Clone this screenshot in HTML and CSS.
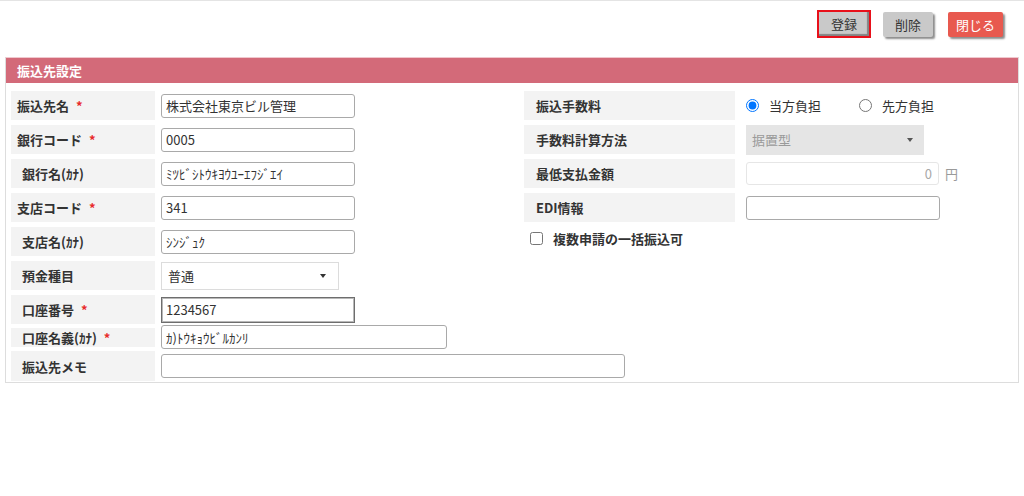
FILE: index.html
```html
<!DOCTYPE html>
<html lang="ja">
<head>
<meta charset="utf-8">
<title>振込先設定</title>
<link rel="stylesheet" href="styles.css">
</head>
<body>
<div class="page">
  <div class="toolbar">
    <button class="btn btn-focus">登録</button>
    <button class="btn btn-delete">削除</button>
    <button class="btn btn-close">閉じる</button>
  </div>
  <section class="panel">
    <h2 class="panel-head">振込先設定</h2>
    <div class="panel-body">
      <div class="col-left">
        <div class="row">
          <div class="label">振込先名 <span class="req">*</span></div>
          <input class="field w194" type="text" value="株式会社東京ビル管理">
        </div>
        <div class="row">
          <div class="label">銀行コード <span class="req">*</span></div>
          <input class="field w194" type="text" value="0005">
        </div>
        <div class="row">
          <div class="label indent">銀行名(ｶﾅ)</div>
          <input class="field w194" type="text" value="ﾐﾂﾋﾞｼﾄｳｷﾖｳﾕｰｴﾌｼﾞｴｲ">
        </div>
        <div class="row">
          <div class="label">支店コード <span class="req">*</span></div>
          <input class="field w194" type="text" value="341">
        </div>
        <div class="row">
          <div class="label indent">支店名(ｶﾅ)</div>
          <input class="field w194" type="text" value="ｼﾝｼﾞｭｸ">
        </div>
        <div class="row">
          <div class="label indent">預金種目</div>
          <div class="select select-white"><span>普通</span><i class="caret"></i></div>
        </div>
        <div class="row row-tight">
          <div class="label indent">口座番号 <span class="req">*</span></div>
          <input class="field field-active w194" type="text" value="1234567">
        </div>
        <div class="row row-short">
          <div class="label label-short indent">口座名義(ｶﾅ) <span class="req">*</span></div>
          <input class="field w286" type="text" value="ｶ)ﾄｳｷｮｳﾋﾞﾙｶﾝﾘ">
        </div>
        <div class="row row-last">
          <div class="label indent">振込先メモ</div>
          <input class="field w464" type="text" value="">
        </div>
      </div>
      <div class="col-right">
        <div class="rrow">
          <div class="rlabel">振込手数料</div>
          <div class="radios">
            <label class="radio"><input type="radio" name="fee" checked><span>当方負担</span></label>
            <label class="radio"><input type="radio" name="fee"><span>先方負担</span></label>
          </div>
        </div>
        <div class="rrow">
          <div class="rlabel">手数料計算方法</div>
          <div class="select select-disabled"><span>据置型</span><i class="caret"></i></div>
        </div>
        <div class="rrow">
          <div class="rlabel">最低支払金額</div>
          <div class="amount">
            <input class="field field-disabled w193" type="text" value="0" disabled>
            <span class="unit">円</span>
          </div>
        </div>
        <div class="rrow">
          <div class="rlabel">EDI情報</div>
          <input class="field w194" type="text" value="">
        </div>
        <label class="check"><input type="checkbox"><span>複数申請の一括振込可</span></label>
      </div>
    </div>
  </section>
</div>
</body>
</html>
```

FILE: styles.css
```css
html, body {
  margin: 0;
  padding: 0;
  background: #ffffff;
}

body {
  font-family: "Noto Sans CJK JP", "Noto Sans", "Liberation Sans", sans-serif;
  font-size: 13px;
  color: #333333;
}

.page {
  border-top: 1px solid #e4e4e4;
}

.toolbar {
  height: 46px;
  display: flex;
  align-items: center;
  justify-content: flex-end;
  padding-right: 21px;
}

.btn {
  font-family: inherit;
  font-size: 13px;
  color: #333333;
  background: #c9c9c9;
  border: none;
  border-radius: 2px;
  height: 25px;
  padding: 0;
  box-shadow: 2px 2px 2px rgba(0, 0, 0, 0.45);
  line-height: 25px;
}

.btn-focus {
  width: 54px;
  height: 28px;
  border: 2px solid #e8101a;
  border-radius: 0;
  box-shadow: inset -2px -2px 1px rgba(0, 0, 0, 0.35);
  line-height: 22px;
}

.btn-delete {
  width: 50px;
  margin-left: 12px;
}

.btn-close {
  width: 55px;
  margin-left: 15px;
  background: #e8594f;
  color: #ffffff;
}

.panel {
  margin: 10px 5px 0 5px;
  border: 1px solid #dddddd;
  border-top-color: #f0c8ce;
}

.panel-head {
  margin: 0;
  height: 25px;
  line-height: 25px;
  background: #d36a79;
  color: #ffffff;
  font-size: 13px;
  font-weight: bold;
  padding-left: 11px;
}

.panel-body {
  display: grid;
  grid-template-columns: 513px 1fr;
  padding: 8px 0 1px 5px;
}

.row {
  display: flex;
  align-items: center;
  gap: 6px;
  height: 29px;
  margin-bottom: 5px;
}

.row-tight {
  margin-bottom: 1px;
}

.row-short {
  height: 24px;
  margin-bottom: 2px;
}

.row-last {
  height: 30px;
  margin-bottom: 0;
}

.label {
  box-sizing: border-box;
  width: 144px;
  height: 100%;
  flex: none;
  display: flex;
  align-items: center;
  gap: 4px;
  padding-left: 6px;
  background: #f3f3f3;
  font-weight: bold;
  white-space: pre;
}

.label.indent {
  padding-left: 11px;
}

.label-short {
  height: 19px;
}

.req {
  color: #e82a2a;
  font-weight: bold;
}

.field {
  box-sizing: border-box;
  flex: none;
  height: 24px;
  border: 1px solid #a9a9a9;
  border-radius: 3px;
  padding: 0 4px;
  font-family: inherit;
  font-size: 13px;
  color: #333333;
  background: #ffffff;
  outline: none;
}

.w193 { width: 193px; }
.w194 { width: 194px; }
.w286 { width: 286px; }
.w464 { width: 464px; }

.field-active {
  height: 26px;
  border: 1px solid #6e6e6e;
  border-radius: 0;
  box-shadow: inset 0 0 0 1px #b8b8b8;
}

.field-disabled {
  height: 23px;
  border-color: #e6e6e6;
  color: #a8a8a8;
  text-align: right;
  padding-right: 6px;
}

.amount {
  display: flex;
  align-items: center;
  gap: 6px;
}

.unit {
  color: #9a9a9a;
}

.select {
  box-sizing: border-box;
  flex: none;
  height: 28px;
  width: 178px;
  display: flex;
  align-items: center;
  justify-content: space-between;
  padding: 0 12px 0 6px;
}

.select-white {
  border: 1px solid #dcdcdc;
  background: #ffffff;
  color: #333333;
}

.select-disabled {
  height: 30px;
  background: #e5e5e5;
  color: #9a9a9a;
  padding-right: 11px;
}

.caret {
  width: 0;
  height: 0;
  border-left: 3.5px solid transparent;
  border-right: 3.5px solid transparent;
  border-top: 4px solid #333333;
}

.select-disabled .caret {
  border-top-color: #555555;
}

.rrow {
  display: flex;
  align-items: center;
  gap: 11px;
  height: 29px;
  margin-bottom: 5px;
}

.rlabel {
  box-sizing: border-box;
  width: 211px;
  height: 100%;
  flex: none;
  display: flex;
  align-items: center;
  padding-left: 12px;
  background: #f3f3f3;
  font-weight: bold;
}

.radios {
  display: flex;
  align-items: center;
  gap: 38px;
}

.radio {
  display: flex;
  align-items: center;
  gap: 10px;
}

.radio input {
  margin: 0;
  width: 13px;
  height: 13px;
}

.check {
  display: flex;
  align-items: center;
  gap: 10px;
  margin: 7px 0 0 6px;
  font-weight: bold;
}

.check input {
  margin: 0;
  width: 13px;
  height: 13px;
}
```
